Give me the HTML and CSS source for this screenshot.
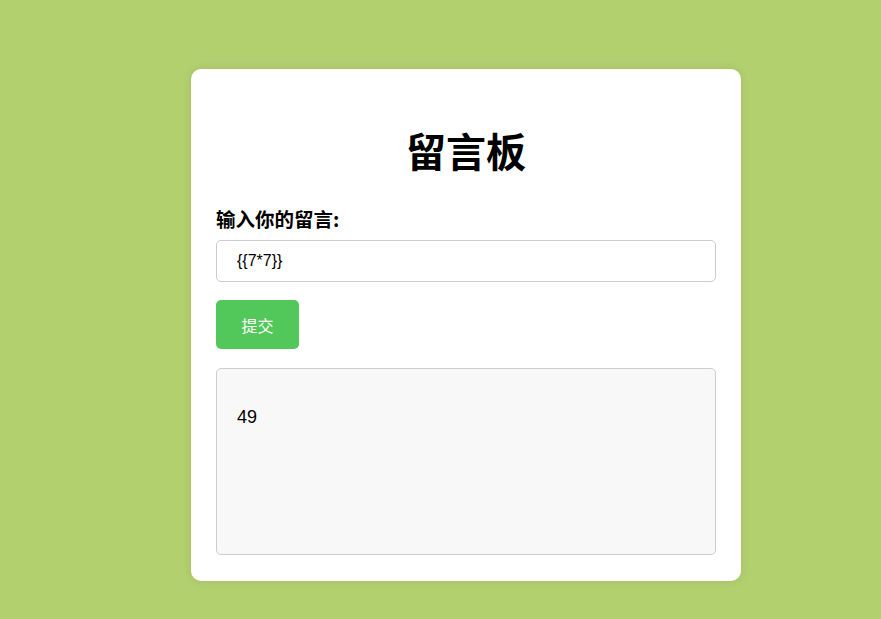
FILE: index.html
```html
<!DOCTYPE html>
<html lang="zh">
<head>
<meta charset="utf-8">
<title>留言板</title>
<link rel="stylesheet" href="styles.css">
</head>
<body>
<div class="page">
  <div class="card">
    <h1 class="title">留言板</h1>
    <label class="label" for="msg">输入你的留言:</label>
    <input class="input" id="msg" type="text" value="{{7*7}}">
    <button class="btn" type="button">提交</button>
    <div class="output">49</div>
  </div>
</div>
</body>
</html>
```
FILE: styles.css
```css
html, body {
  margin: 0;
  padding: 0;
}
body {
  background: #b3d06f;
  font-family: "Liberation Sans", "Noto Sans CJK SC", sans-serif;
  color: #000;
  height: 619px;
  overflow: hidden;
}
.page {
  display: flex;
  padding: 69px 0 0 191px;
}
.card {
  width: 500px;
  height: 462px;
  background: #fff;
  border-radius: 10px;
  padding: 25px;
  box-shadow: 0 0 10px rgba(0, 0, 0, 0.1);
  display: flex;
  flex-direction: column;
}
.title {
  margin: 27px 0 27px;
  text-align: center;
  font-size: 40px;
  font-weight: bold;
  font-family: "Noto Sans CJK SC", sans-serif;
  line-height: 58px;
}
.label {
  font-size: 19.5px;
  font-weight: bold;
  font-family: "Noto Sans CJK SC", sans-serif;
  line-height: 26px;
  margin-bottom: 8px;
}
.input {
  box-sizing: border-box;
  width: 500px;
  height: 42px;
  padding: 0 20px;
  border: 1px solid #ccc;
  border-radius: 5px;
  font-size: 16px;
  font-family: "Liberation Sans", sans-serif;
  color: #000;
  margin: 0 0 18px;
  outline: none;
}
.btn {
  align-self: flex-start;
  box-sizing: border-box;
  width: 83px;
  height: 49px;
  background: #52c75a;
  color: #fff;
  border: none;
  border-radius: 5px;
  font-size: 16px;
  font-family: "Noto Sans CJK SC", sans-serif;
  padding: 0;
  margin-bottom: 19px;
}
.output {
  box-sizing: border-box;
  width: 500px;
  height: 187px;
  background: #f8f8f8;
  border: 1px solid #ccc;
  border-radius: 5px;
  padding: 37px 20px 20px;
  font-size: 18px;
  line-height: 22px;
}
```
